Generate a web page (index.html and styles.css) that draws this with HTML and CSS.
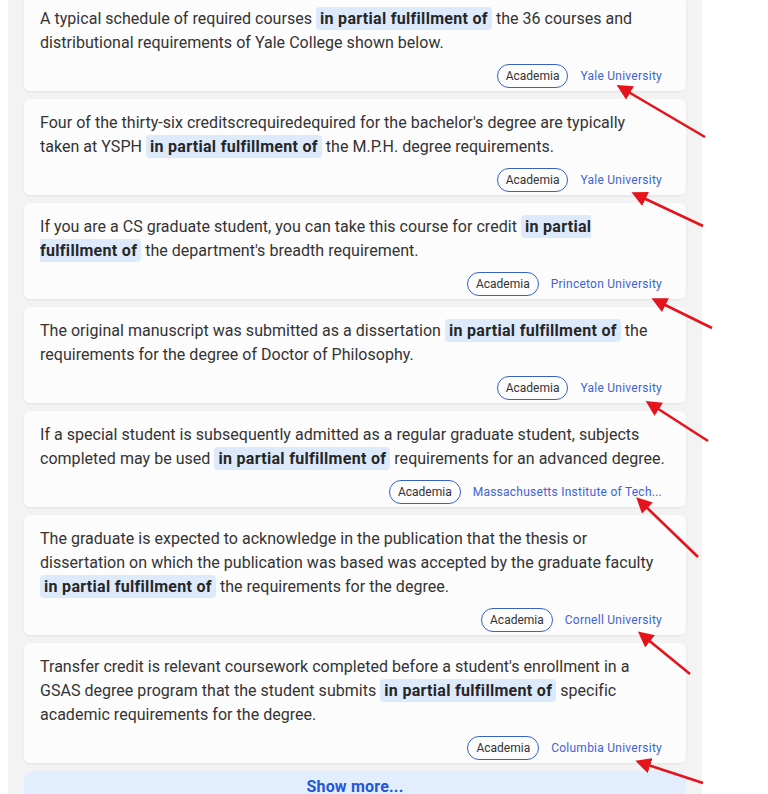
FILE: index.html
```html
<!DOCTYPE html>
<html lang="en">
<head>
<meta charset="utf-8">
<title>in partial fulfillment of</title>
<link rel="stylesheet" href="styles.css">
</head>
<body>
<div class="page">
  <div class="panel">
    <div class="card">
      <p class="text">A typical schedule of required courses <span class="hl">in partial fulfillment of</span> the 36 courses and distributional requirements of Yale College shown below.</p>
      <div class="meta"><span class="tag">Academia</span><a class="src" href="#">Yale University</a></div>
    </div>
    <div class="card">
      <p class="text">Four of the thirty-six creditscrequiredequired for the bachelor's degree are typically taken at YSPH <span class="hl">in partial fulfillment of</span> the M.P.H. degree requirements.</p>
      <div class="meta"><span class="tag">Academia</span><a class="src" href="#">Yale University</a></div>
    </div>
    <div class="card">
      <p class="text">If you are a CS graduate student, you can take this course for credit <span class="hl">in partial fulfillment of</span> the department's breadth requirement.</p>
      <div class="meta"><span class="tag">Academia</span><a class="src" href="#">Princeton University</a></div>
    </div>
    <div class="card">
      <p class="text">The original manuscript was submitted as a dissertation <span class="hl">in partial fulfillment of</span> the requirements for the degree of Doctor of Philosophy.</p>
      <div class="meta"><span class="tag">Academia</span><a class="src" href="#">Yale University</a></div>
    </div>
    <div class="card">
      <p class="text">If a special student is subsequently admitted as a regular graduate student, subjects completed may be used <span class="hl">in partial fulfillment of</span> requirements for an advanced degree.</p>
      <div class="meta"><span class="tag">Academia</span><a class="src" href="#">Massachusetts Institute of Tech...</a></div>
    </div>
    <div class="card">
      <p class="text">The graduate is expected to acknowledge in the publication that the thesis or dissertation on which the publication was based was accepted by the graduate faculty <span class="hl">in partial fulfillment of</span> the requirements for the degree.</p>
      <div class="meta"><span class="tag">Academia</span><a class="src" href="#">Cornell University</a></div>
    </div>
    <div class="card">
      <p class="text">Transfer credit is relevant coursework completed before a student's enrollment in a GSAS degree program that the student submits <span class="hl">in partial fulfillment of</span> specific academic requirements for the degree.</p>
      <div class="meta"><span class="tag">Academia</span><a class="src" href="#">Columbia University</a></div>
    </div>
    <button class="more">Show more...</button>
  </div>
  <svg class="arrows" width="768" height="794" viewBox="0 0 768 794">
    <defs>
      <marker id="ah" markerWidth="6" markerHeight="6" refX="4.5" refY="3" orient="auto" markerUnits="strokeWidth">
        <path d="M0,0 L6,3 L0,6 Z" fill="#e5141c"/>
      </marker>
    </defs>
    <g stroke="#e5141c" stroke-width="2.6" marker-end="url(#ah)">
      <line x1="705" y1="137" x2="620" y2="87"/>
      <line x1="703" y1="226" x2="635" y2="194"/>
      <line x1="712" y1="328" x2="655" y2="300"/>
      <line x1="708" y1="441" x2="649" y2="403"/>
      <line x1="698" y1="557" x2="639" y2="500"/>
      <line x1="690" y1="674" x2="641" y2="634"/>
      <line x1="703" y1="783" x2="639" y2="762"/>
    </g>
  </svg>
</div>
</body>
</html>
```
FILE: styles.css
```css
html, body {
  margin: 0;
  padding: 0;
  background: #ffffff;
}
body {
  font-family: Roboto, "Liberation Sans", sans-serif;
  color: #333333;
  overflow: hidden;
}
.page {
  position: relative;
  width: 768px;
  height: 794px;
  overflow: hidden;
}
.panel {
  width: 662px;
  margin: -21px 0 0 8px;
  padding: 16px;
  background: #f3f3f3;
  display: flex;
  flex-direction: column;
  gap: 8px;
}
.card {
  background: #fcfcfc;
  border-radius: 6px;
  box-shadow: 0 1px 3px rgba(0, 0, 0, 0.07);
  padding: 12px 19px 3px 16px;
}
.text {
  margin: 0;
  font-size: 16px;
  line-height: 24px;
  letter-spacing: 0.03px;
  color: #333333;
}
.hl {
  background: #dceafc;
  font-weight: 700;
  color: #262626;
  padding: 2px 4px;
  border-radius: 4px;
  letter-spacing: 0.3px;
}
.meta {
  margin-top: 9px;
  display: flex;
  justify-content: flex-end;
  align-items: center;
  gap: 12px;
  padding-right: 5px;
  height: 24px;
}
.tag {
  box-sizing: border-box;
  height: 24px;
  line-height: 22px;
  padding: 0 8px;
  border: 1px solid #3562c4;
  border-radius: 12px;
  font-size: 12px;
  color: #333333;
}
.src {
  font-size: 12px;
  letter-spacing: 0.25px;
  color: #3f63d3;
  text-decoration: none;
}
.more {
  margin: 0;
  height: 32px;
  line-height: 32px;
  border: none;
  border-radius: 10px;
  background: #e2edfd;
  color: #2356d8;
  font-family: Roboto, "Liberation Sans", sans-serif;
  font-size: 16px;
  font-weight: 700;
  letter-spacing: 0.2px;
  padding: 0;
  text-align: center;
}
.arrows {
  position: absolute;
  left: 0;
  top: 0;
  pointer-events: none;
}
```
